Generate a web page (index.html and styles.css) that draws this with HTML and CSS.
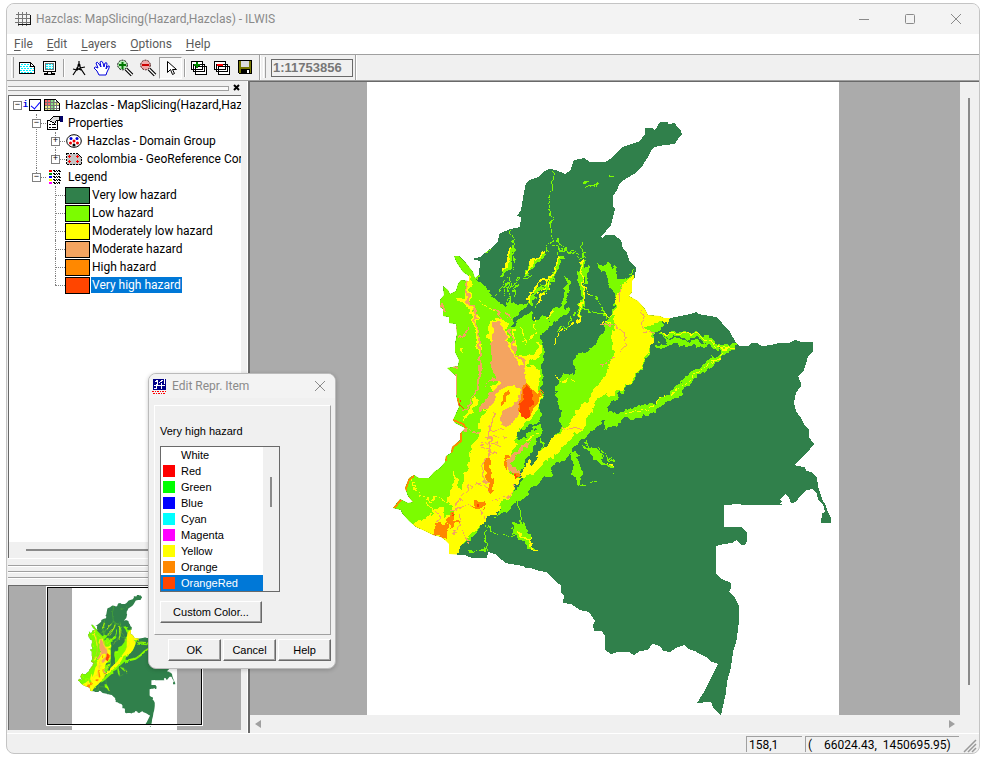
FILE: index.html
```html
<!DOCTYPE html>
<html lang="en">
<head>
<meta charset="utf-8">
<title>Hazclas: MapSlicing(Hazard,Hazclas) - ILWIS</title>
<link rel="stylesheet" href="styles.css">
</head>
<body>
<div class="window">
  <header class="titlebar">
    <svg class="app-icon" width="17" height="14" viewBox="0 0 17 14" shape-rendering="crispEdges"><path d="M1 2.500h14M0 6.500h16M0 10.500h16M3.500 0v14M7.500 0v14M11.500 0v14" stroke="#777" fill="none"/><path d="M15.500 3v9.500h-13" stroke="#111" fill="none"/></svg>
    <h1>Hazclas: MapSlicing(Hazard,Hazclas) - ILWIS</h1>
    <div class="caption-buttons">
      <button aria-label="Minimize"><svg width="12" height="12"><path d="M1 6.500h10"/></svg></button>
      <button aria-label="Maximize"><svg width="12" height="12"><rect x="1.500" y="1.500" width="9" height="9" rx="1"/></svg></button>
      <button aria-label="Close"><svg width="12" height="12"><path d="M1 1l10 10M11 1L1 11"/></svg></button>
    </div>
  </header>
  <nav class="menubar">
    <button><u>F</u>ile</button><button><u>E</u>dit</button><button><u>L</u>ayers</button><button><u>O</u>ptions</button><button><u>H</u>elp</button>
  </nav>
  <div class="toolbar">
    <span class="grip"></span>
    <button aria-label="Entire map"><svg width="18" height="16" viewBox="0 0 18 16" shape-rendering="crispEdges"><path d="M1.500 2.500h11l4 4v7h-15z" fill="#fff" stroke="#000"/><path d="M3 4.500h9M2 6.500h10M3 8.500h13M2 10.500h14M3 12.500h12" stroke="#0ef" stroke-dasharray="2 1"/><path d="M12.500 2.500v4h4" fill="none" stroke="#000"/></svg></button>
    <button aria-label="Redraw"><svg width="16" height="16" viewBox="0 0 16 16" shape-rendering="crispEdges"><rect x="1.500" y="1.500" width="12" height="10" fill="#fff" stroke="#000"/><rect x="3.500" y="3.500" width="8" height="6" fill="#dff" stroke="#777"/><path d="M4 4.500h7M4 6.500h7M4 8.500h7" stroke="#0ef" stroke-dasharray="2 1"/><path d="M5.500 11.500h4v2h3v1h-10v-1h3z" fill="#eee" stroke="#000"/></svg></button>
    <span class="sep"></span>
    <button aria-label="Measure distance"><svg width="16" height="16" viewBox="0 0 16 16"><path d="M8 1v4M8 4L6 9 2 15M8 4l2 5 4 6M2 9l4 1 3-2 5-1M5 8l5 2" fill="none" stroke="#000" stroke-width="1.200"/><circle cx="8" cy="5" r="1.500"/></svg></button>
    <button aria-label="Pan"><svg width="18" height="18" viewBox="0 0 18 18"><path d="M6 16l-2-4-3-3q1-2 4 0L3 4q1-2 3 1l2 3-1-5q2-2 3 1l1 4 1-4q2-1 2 1l-1 5 2-3q2-1 1 2l-2 4-1 3z" fill="#fff" stroke="#00d"/></svg></button>
    <button aria-label="Zoom in"><svg width="18" height="18" viewBox="0 0 18 18"><path d="M10 10l6 6" stroke="#000" stroke-width="3.500"/><path d="M10 10l6 6" stroke="#fff" stroke-width="1.300"/><circle cx="6.500" cy="6" r="4.800" fill="#beb" stroke="#000" stroke-dasharray="2 1"/><path d="M3 6h7M6.500 3v7" stroke="#070" stroke-width="2"/></svg></button>
    <button aria-label="Zoom out"><svg width="18" height="18" viewBox="0 0 18 18"><path d="M10 10l6 6" stroke="#000" stroke-width="3.500"/><path d="M10 10l6 6" stroke="#fff" stroke-width="1.300"/><circle cx="6.500" cy="6" r="4.800" fill="#eaa" stroke="#411" stroke-dasharray="2 1"/><path d="M3 6h7" stroke="#c00" stroke-width="2"/></svg></button>
    <button class="pressed" aria-label="Normal pointer"><svg width="12" height="16" viewBox="0 0 12 16"><path d="M2.500 1.500v11l3-3 2 5 2-1-2-4h4z" fill="#fff" stroke="#000"/></svg></button>
    <span class="sep"></span>
    <button aria-label="Add layer"><svg width="17" height="16" viewBox="0 0 17 16" shape-rendering="crispEdges"><path d="M4.500 6.500h11v8h-11zM2.500 4.500h11v7h-11zM.500 1.500h11v8h-11z" fill="#fff" stroke="#000"/><path d="M3 5h6M6 2v6" stroke="#080" stroke-width="2"/></svg></button>
    <button aria-label="Remove layer"><svg width="17" height="16" viewBox="0 0 17 16" shape-rendering="crispEdges"><path d="M4.500 6.500h11v8h-11zM2.500 4.500h11v7h-11zM.500 1.500h11v8h-11z" fill="#fff" stroke="#000"/><path d="M3 5h6" stroke="#f00" stroke-width="2"/></svg></button>
    <button aria-label="Save view"><svg width="15" height="15" viewBox="0 0 15 15" shape-rendering="crispEdges"><path d="M.500.500h13v13H1.500l-1-1z" fill="#770" stroke="#000"/><path d="M3 1h8v6H3z" fill="#ddd"/><path d="M3 9h9v5H3z"/><path d="M9 10h2v3H9z" fill="#fff"/></svg></button>
    <span class="bar-end"></span>
    <span class="grip"></span>
    <input class="scale" type="text" value="1:11753856" aria-label="Scale">
    <span class="bar-end"></span>
  </div>

  <main class="workspace">
    <aside class="dock">
      <div class="dock-head"><span class="dock-grip"></span><button aria-label="Close panel"><svg width="8" height="8"><path d="M1 1l5 5M6 1L1 6" stroke="#000" stroke-width="2"/></svg></button></div>
      <div class="tree-box">
        <ul class="tree">
          <li>
            <div class="row root"><span class="exp">−</span><i class="info">i</i><input type="checkbox" checked aria-label="Show layer Hazclas">
              <svg width="16" height="12" viewBox="0 0 16 12" shape-rendering="crispEdges"><path d="M0 0h12l4 4v8H0z" fill="#fff"/><path d="M1 1h5v5H1z" fill="#f66"/><path d="M6 1h5v10H6z" fill="#8d8"/><path d="M11 3h4v4h-4zM1 7h5v4H1z" fill="#ee8"/><path d="M0 3.500h15M0 6.500h15M0 9.500h15M3.500 0v12M6.500 0v12M9.500 0v12M12.500 1v11" stroke="#777"/><path d="M.500.500h11l4 4v7H.500z" fill="none" stroke="#000"/></svg>
              <span class="label">Hazclas - MapSlicing(Hazard,Hazclas)</span></div>
            <ul>
              <li>
                <div class="row"><span class="exp">−</span>
                  <svg width="16" height="14" viewBox="0 0 16 14" shape-rendering="crispEdges"><path d="M.500 4.500h10v9H.500z" fill="#fff" stroke="#000"/><path d="M2 8.500h2M5 8.500h4M2 11.500h2M5 11.500h4" stroke="#000"/><path d="M2.500 4.500l4-4h6v4h-3l-2 3z" fill="#ddd" stroke="#000"/><path d="M13 0h3v6h-3z" fill="#006"/></svg>
                  <span class="label">Properties</span></div>
                <ul>
                  <li><div class="row"><span class="exp">+</span>
                    <svg width="16" height="14" viewBox="0 0 16 14"><ellipse cx="8" cy="7" rx="7.300" ry="6.300" fill="#fff" stroke="#000"/><circle cx="5" cy="4.500" r="1.500" fill="#00d"/><circle cx="11" cy="4.500" r="1.500" fill="#00d"/><circle cx="8" cy="7" r="1.500" fill="#e00"/><circle cx="4.500" cy="9" r="1.500" fill="#e00"/><circle cx="11.500" cy="9" r="1.500" fill="#e00"/><circle cx="8" cy="11" r="1.500"/></svg>
                    <span class="label">Hazclas - Domain Group</span></div></li>
                  <li><div class="row"><span class="exp">+</span>
                    <svg width="16" height="12" viewBox="0 0 16 12" shape-rendering="crispEdges"><path d="M.500.500h11l4 4v7H.500z" fill="#c4c4c4" stroke="#000" stroke-dasharray="2 1"/><path d="M2 3.500h3M3.500 2v3M10 3.500h3M11.500 2v3M2 8.500h3M3.500 7v3M10 8.500h3M11.500 7v3" stroke="#f00"/></svg>
                    <span class="label">colombia - GeoReference Corners</span></div></li>
                </ul>
              </li>
              <li>
                <div class="row"><span class="exp">−</span>
                  <svg class="legend-icon" width="12" height="14" viewBox="0 0 12 14" shape-rendering="crispEdges"><path d="M0 0h3v2H0z" fill="#f00"/><path d="M0 3h3v2H0z" fill="#090"/><path d="M0 6h3v2H0z" fill="#00f"/><path d="M0 9h3v2H0z" fill="#ff0"/><path d="M0 12h3v2H0z" fill="#f0f"/><path d="M4 .500h8M5 1.500h7M4 3.500h7M5 4.500h6M4 6.500h8M5 7.500h7M4 9.500h7M5 10.500h7M4 12.500h8M5 13.500h6" stroke="#000" stroke-dasharray="2 1 1 1"/></svg>
                  <span class="label">Legend</span></div>
                <ul>
                  <li><div class="row leaf"><span class="swatch very-low"></span><span class="label">Very low hazard</span></div></li>
                  <li><div class="row leaf"><span class="swatch low"></span><span class="label">Low hazard</span></div></li>
                  <li><div class="row leaf"><span class="swatch moderately-low"></span><span class="label">Moderately low hazard</span></div></li>
                  <li><div class="row leaf"><span class="swatch moderate"></span><span class="label">Moderate hazard</span></div></li>
                  <li><div class="row leaf"><span class="swatch high"></span><span class="label">High hazard</span></div></li>
                  <li><div class="row leaf"><span class="swatch very-high"></span><span class="label selected">Very high hazard</span></div></li>
                </ul>
              </li>
            </ul>
          </li>
        </ul>
        <div class="tree-scroll"><span></span></div>
      </div>
      <div class="splitter"><span></span><span></span><span></span></div>
      <div class="overview">
        <svg class="overview-map" width="105" height="143" viewBox="367 86 472 643"><path d="M367 80h472v660H367z" fill="#fff"/><use href="#colombia"/></svg>
        <span class="extent"></span>
      </div>
    </aside>

    <section class="view">
      <div class="canvas">
        <svg class="map" width="472" height="633" viewBox="367 82 472 633" shape-rendering="crispEdges" role="img" aria-label="Hazard map of Colombia">
          <defs>
            <filter id="rough" filterUnits="userSpaceOnUse" x="367" y="82" width="472" height="633" color-interpolation-filters="sRGB">
              <feTurbulence type="fractalNoise" baseFrequency="0.14" numOctaves="2" seed="4" result="noise"/>
              <feDisplacementMap in="SourceGraphic" in2="noise" scale="9" xChannelSelector="R" yChannelSelector="G"/>
            </filter>
            <path id="coast" d="M660 122L668 122 668 124 675 123 677 127 680 129 682 134 679 137 675 144 664 145 654 147 651 151 648 157 641 168 634 174 627 178 620 183 617 190 613 196 613 207 615 209 613 217 611 225 606 231 601 237 603 238 605 235 614 235 621 240 623 249 627 253 630 262 636 267 635 277 632 281 632 292 629 296 638 301 645 309 648 315 660 316 664 318 671 318 690 314 697 312 698 314 716 317 722 323 730 332 735 341 739 346 748 346 752 343 757 343 762 346 771 345 779 343 789 343 795 340 801 342 813 342 813 352 808 356 806 364 804 370 798 376 801 383 801 386 796 393 794 403 796 411 801 418 804 424 809 430 809 437 814 444 810 449 795 464 796 466 805 467 806 471 812 472 817 478 818 486 822 499 825 504 828 512 831 518 831 523 821 523 822 513 825 512 823 504 818 500 817 494 813 489 806 490 800 496 796 502 791 503 789 497 785 494 780 499 782 502 779 503 783 505 741 505 740 504 724 505 724 527 742 527 747 533 747 541 745 545 741 545 737 540 732 543 724 544 716 546 716 574 722 579 731 583 731 588 729 592 735 598 739 606 739 621 738 630 736 643 733 652 731 667 727 682 726 693 723 706 721 715 717 712 713 708 712 703 709 702 697 703 704 692 710 680 718 664 712 662 706 657 700 654 695 651 688 649 684 645 678 647 673 650 670 652 663 651 661 647 657 645 652 644 648 650 640 651 634 655 629 652 618 652 611 654 605 650 605 636 602 631 594 631 593 625 595 621 589 612 580 610 571 604 563 603 564 596 561 592 561 585 556 582 549 575 546 572 539 571 531 568 526 568 523 566 505 563 502 560 495 554 488 552 487 558 472 558 465 555 449 554 449 544 445 540 441 537 433 535 425 531 416 527 409 521 402 513 401 510 393 508 400 499 408 503 413 502 408 496 405 488 409 478 414 475 419 478 429 478 434 472 440 468 445 462 446 456 451 453 452 447 460 440 460 434 465 428 455 423 453 420 459 407 456 395 456 376 447 368 458 366 459 360 455 352 455 344 457 334 456 324 449 323 449 317 443 316 443 309 440 307 440 300 444 295 443 286 448 290 450 294 456 291 458 284 461 280 469 281 469 276 463 272 457 263 454 256 459 256 466 263 473 272 475 278 479 275 480 261 472 259 480 257 490 249 498 242 499 234 510 229 520 227 521 217 517 216 521 210 523 198 526 183 530 180 538 177 545 171 549 169 556 170 565 174 570 171 574 160 584 158 590 162 605 162 612 158 622 147 640 141 645 134 645 128 652 128 655 130z"/>
            <clipPath id="land"><use href="#coast"/></clipPath>
          </defs>
          <g id="colombia">
            <use href="#coast" fill="#30804b"/>
            <g clip-path="url(#land)"><g filter="url(#rough)">
              <g class="f-low">
                <path d="M435 250L466 255 478 278 483 286 490 293 497 301 505 307 514 300 520 304 529 300 522 312 513 320 511 328 519 318 530 313 535 325 542 315 548 322 552 312 558 306 568 310 563 318 553 323 546 329 541 336 545 352 541 365 543 380 541 400 542 432 531 452 521 470 512 488 503 504 487 518 478 530 463 545 455 560 380 560 380 250z"/>
                <path d="M597 265L612 263 614 270 617 279 632 278 660 300 662 325 654 335 647 358 640 372 626 388 617 398 606 410 613 417 602 423 583 440 570 451 567 458 552 465 553 476 544 478 534 487 525 495 517 503 505 512 495 517 505 498 524 480 545 450 560 428 560 408 556 390 558 380 563 373 569 375 575 370 575 357 590 350 602 334 610 312 618 300 611 286 607 276z"/>
                <path d="M606 415L633 407 655 403 672 390 688 374 705 362 720 353 720 346 736 344 737 348 725 352 716 364 702 374 690 384 678 396 654 413 620 421 605 431z"/>
                <path d="M660 333L680 332 705 334 722 347 716 350 702 339 680 337 658 336zM660 337L672 338 691 340 709 344 705 348 673 344 669 347 654 347 654 343 669 344z"/>
                <path d="M570 451L577 451 582 478 579 487 573 473zM582 446L598 450 605 463 616 467 610 469 600 463 592 456zM513 523L522 523 530 536 531 546 537 552 530 551 523 541 515 537z"/>
              </g>
              <g class="s-low" fill="none">
                <path d="M550 170l3 5v6l-1 8-3 10v12l2 12 1 10v10l8 6 10 4 12 6 5-8M553 240l-5 8-4 5M555 240l8 6 3 5 10 1M583 243l2 19M510 231l3 8v10M585 184l6-3M586 188l11-4M610 176h5M636 266l-6 13M491 247l-10 9"/>
                <path d="M515 246l-2 17-4 12-6 12-9 10M509 277l2 15-4 13M511 290l8-13 8 1 3-2M584 262l-2 42-7 8-7 13-12 7M584 288l12 10 7 10 4 10M583 308l22 8M500 301l7-18 4 22M520 277l-7 20M559 250l-1 18-8 10-5 12-10 18M596 445l8 10 10 6M585 441l5 8 6 2 6 8M578 487l10-2 3-4h7M610 474h6M519 500l2 22v20M485 526l9 8 22 2 13 5M485 530v20h-16"/>
              </g>
              <g class="s-low" fill="none" stroke-width="4">
                <path d="M513 248L508 263 502 276M545 253L535 262 528 268 526 276M562 255L558 267 548 284 535 292 530 305M581 263L580 280 583 305 578 318M567 277L567 292 563 305 555 318M590 265L585 270 588 285M557 445L560 458M528 325L523 340"/>
                <path d="M541 450L545 420M524 440L530 452" stroke-width="2"/>
              </g>
              <g class="f-mid">
                <path d="M632 278L622 285 615 300 613 340 613 357 606 374 600 382 590 395 580 408 570 422 555 436 540 450 525 464 522 478 530 477 545 463 567 445 582 428 592 412 598 397 607 393 611 397 622 390 640 370 651 346 653 337 645 326 668 322 668 312 650 300 640 280z"/>
                <path d="M491 320L505 318 510 342 518 355 532 354 538 349 535 343 542 347 541 358 526 365 539 368 539 382 540 408 528 420 520 430 515 442 511 455 507 465 510 477 521 478 512 492 503 505 492 515 484 524 470 533 463 545 455 560 440 560 410 527 420 520 428 516 442 505 444 516 455 514 448 500 456 470 459 492 465 475 472 448 480 437 478 425 490 405 496 394 490 387 498 380 491 360 494 343 486 338z"/>
                <path d="M468 273L472 282 470 304 477 315 477 330 482 345 480 360 476 340 471 315 465 302 458 303 457 298 465 299 467 285zM461 347L465 355 461 352zM463 420L475 397 478 400 470 415z"/>
                <path d="M503 425l19-13-14 12-12 18zM540 430l-12 11h-5z"/>
              </g>
              <g class="s-mid" fill="none">
                <path d="M512 248L507 263 503 270M544 252L530 265 526 275M560 256L553 276 543 279 531 292 528 303M580 262L583 280 583 300 578 322" stroke-width="2"/>
                <path d="M582 285L592 295M520 325L524 335 526 345M538 295L548 278 549 290M504 435L520 426 530 416M575 322L560 333 554 345M556 375L560 382 575 380M410 470L415 490 425 500 438 498 448 502M425 502L434 510 445 512M480 435L487 420M480 300L500 315M513 330L515 350M495 400L505 385 520 376M536 315L534 335 522 340M604 315L614 313M603 321L618 325"/>
                <path d="M660 334L680 333 700 335 716 345 723 349 736 347M723 349L720 357 705 367 690 379 678 391 660 399 647 410 625 413"/>
                <path stroke-width="2" d="M607 462l8 4M518 534l12 6 2 10 4 2M545 292l-8 12M546 321l8-9"/>
              </g>
              <path class="f-moderate" d="M494 321h6l6 12 3 14 7 12 8 10 2 13-1 20-8 15-8 10-9-1v-9l8-9 10-8 2-9-6-6-14 4-6 12-7 10h-7l1-6 11-14 8-8-6-5-2-12-2-14zM504 311l4 4 4 8M532 440L524 446 513 452 507 462 508 472 518 476 523 473 518 470 512 463 514 457 526 449z"/>
              <g class="s-moderate" fill="none" stroke-width="2">
                <path d="M467 280l1 20 8 10-1 10 5 22v30l-3 15-10 20-7 6M495 309l8 10M510 330l5 22 8 10v20M495 413l-5 15v22l-8 17 1 13 6 2-1 10"/>
                <path stroke-width="1" d="M480 442l20 3M484 438l14-2M480 445l20 10M495 443l10-6M619 285l1 20M600 322l11 3 12 7 3 13-8 8-7 8-10 5M642 334l14-1M641 312l3 12-1 6M455 505l7-5M462 497l11-13 10-1M475 482l12 6M493 500l14-3 8-13M450 510l12-3 18-3 5 15M490 430l15-1M458 513l2 12-5 8M437 512l1 12M562 429l18-1M462 530l8 15M480 433l-18-4M470 330l-10 8M505 370l18 3M485 388l10-12"/>
              </g>
              <path d="M484 460h5l6 32-7 1zM472 503l6-2h8v5l-6 4-7-2zM450 513l4-1v8l7 1-6 4-3 4-5-5zM436 525l10-2 3 8-3 9-12-4zM523 386l5-3 4 6 6 4 5-2-5 6-2 7-5 10-8 2-6-5 4-12zM503 395l4-3v6l-5 5zM505 455l4 0-2 7v8l-3-7zM513 474l8-1-3 4z" class="f-high"/>
              <path d="M524 386l7 2 1 5 0 9-3 5 1 8-6 1-5-3 1-9 4-5zM513 475l5 1-3 2zM474 506l5-1v3zM450 515l3-1v3zM453 417l4 2-4 2zM460 400l2 8-1 3z" class="f-extreme"/>
              <g class="f-none"><path d="M545 355l8-7 4 12-4 18v20l-5 20 2 15-8 10-2-20 4-20zM496 288l7 8 2 9-8-6zM520 430l20-8-8 9-14 8zM533 448l7-6-3 18-7 6zM514 485l5-2-4 9z"/></g>
            </g>
              <path d="M440 308l2-4 3 8M456 326v10M452 366l6 2M456 374v21" class="s-moderate" fill="none" stroke-width="2"/>
              <path d="M458 398v8M453 420l10 4 3 4M461 430v11l-8 6-2 6M446 456v5M414 476l-5 4-3 8v3M408 497l4 5M394 508l7-8" class="s-high" fill="none" stroke-width="2"/>
            </g>
          </g>
        </svg>
      </div>
      <div class="vscroll"><span></span></div>
      <div class="hscroll"><button class="arrow-left" aria-label="Scroll left"></button><button class="arrow-right" aria-label="Scroll right"></button></div>
    </section>
  </main>

  <footer class="statusbar">
    <output class="rowcol">158,1</output>
    <output class="coords">(&nbsp;&nbsp;&nbsp; 66024.43,&nbsp; 1450695.95)</output>
    <svg width="14" height="14"><path d="M1 13L13 1M5 13l8-8M9 13l4-4" stroke="#999" stroke-width="1.500"/></svg>
  </footer>
</div>

<form class="dialog" role="dialog" aria-labelledby="dialog-title">
  <div class="dialog-title">
    <svg width="14" height="15" viewBox="0 0 14 15" shape-rendering="crispEdges"><path d="M1 0h13v11H1z" fill="#008"/><path d="M2 6.500h11M5.500 1v3l-1 3v3M9.500 4v6M12.500 0v5M3 3l3-2M7 4l4-3M2 9.500h3" stroke="#fff" fill="none"/><path d="M0 12.500h14M1 14.500h13" stroke="#f00" stroke-dasharray="2 1 1 1"/></svg>
    <h2 id="dialog-title">Edit Repr. Item</h2>
    <button type="button" aria-label="Close dialog"><svg width="12" height="12"><path d="M1 1l10 10M11 1L1 11"/></svg></button>
  </div>
  <div class="dialog-panel">
    <label for="colors">Very high hazard</label>
    <select id="colors" size="9">
      <option class="c-white">White</option>
      <option class="c-red">Red</option>
      <option class="c-green">Green</option>
      <option class="c-blue">Blue</option>
      <option class="c-cyan">Cyan</option>
      <option class="c-magenta">Magenta</option>
      <option class="c-yellow">Yellow</option>
      <option class="c-orange">Orange</option>
      <option class="c-orangered" selected>OrangeRed</option>
    </select>
    <button type="button" class="push custom">Custom Color...</button>
  </div>
  <div class="dialog-actions">
    <button type="button" class="push">OK</button>
    <button type="button" class="push">Cancel</button>
    <button type="button" class="push">Help</button>
  </div>
</form>
</body>
</html>
```
FILE: styles.css
```css
* { box-sizing: border-box; }

body {
  margin: 0;
  background: #fff;
  color: #000;
  font: 12px/18px Roboto, "Open Sans", sans-serif;
}

button, input, select { font: inherit; color: inherit; }
button { border: 0; padding: 0; background: none; }
ul { list-style: none; margin: 0; padding: 0; }

.window {
  display: flex;
  flex-direction: column;
  height: calc(100vh - 9px);
  margin: 3px 6px 6px;
  border: 1px solid #c4c4c4;
  border-radius: 8px;
  background: #f0f0f0;
  overflow: hidden;
}

.titlebar {
  display: flex;
  align-items: center;
  height: 30px;
  padding-left: 8px;
  background: #f3f3f3;
  color: #8a8a8a;
}
.titlebar h1 { flex: 1; margin: 0 0 0 4px; font: inherit; }
.caption-buttons { display: flex; }
.caption-buttons button { display: grid; place-items: center; width: 46px; height: 28px; }
.caption-buttons svg, .dialog-title button svg { fill: none; stroke: #8a8a8a; }

.menubar {
  display: flex;
  gap: 14px;
  height: 20px;
  padding-left: 7px;
  background: #fff;
  color: #5a5a5a;
}
.menubar button { line-height: 20px; }
.menubar u { text-underline-offset: 2px; }

.toolbar {
  display: flex;
  align-items: center;
  height: 27px;
  padding-left: 4px;
  border-top: 1px solid #a0a0a0;
  border-bottom: 1px solid #a0a0a0;
}
.toolbar button { display: grid; place-items: center; width: 23px; height: 22px; }
.toolbar .pressed { border: 1px solid; border-color: #a0a0a0 #fff #fff #a0a0a0; background: #f8f8f8; }
.grip { width: 3px; height: 21px; margin-right: 1px; border-right: 1px solid #a0a0a0; border-left: 1px solid #fff; }
.sep { width: 2px; height: 18px; margin: 0 2px; border-left: 1px solid #a0a0a0; border-right: 1px solid #fff; }
.bar-end { width: 2px; height: 25px; margin: 0 2px; border-left: 1px solid #a0a0a0; border-right: 1px solid #fff; }
.scale {
  width: 82px;
  height: 18px;
  margin: 0 0 0 4px;
  padding: 0 1px;
  border: 1px solid #696969;
  border-radius: 0;
  background: #f0f0f0;
  color: #777;
  font: bold 13px/16px "Liberation Sans", sans-serif;
}

.workspace { display: flex; flex: 1; min-height: 0; }

.dock {
  display: flex;
  flex-direction: column;
  width: 241px;
  padding: 0 6px 3px 1px;
  border-right: 1px solid #fff;
}
.dock-head { display: flex; align-items: center; justify-content: space-between; height: 14px; }
.dock-grip { width: 221px; height: 5px; border: 1px solid #a0a0a0; border-width: 1px 1px 1px 0; background: #fafafa; }
.dock-head button { width: 8px; height: 8px; line-height: 0; }

.tree-box {
  display: flex;
  flex: 1;
  flex-direction: column;
  border-top: 1px solid #696969;
  border-left: 1px solid #696969;
  background: #fff;
  overflow: hidden;
}
.tree { flex: 1; padding-left: 4px; }
.tree li { position: relative; }
.tree li ul { margin-left: 19px; }
.tree li li::before {
  content: "";
  position: absolute;
  top: 0;
  bottom: 0;
  left: 4px;
  border-left: 1px dotted #808080;
}
.tree li li:last-child::before { bottom: auto; height: 9px; }
.row { position: relative; display: flex; align-items: center; height: 18px; white-space: nowrap; }
.row::before {
  content: "";
  position: absolute;
  top: 9px;
  left: 4px;
  width: 10px;
  border-top: 1px dotted #808080;
}
.row svg { flex: none; margin: 0 5px 0 6px; }
.row.root svg { margin: 0 5px 0 3px; }
.row .legend-icon { margin: 0 7px 0 8px; }
.label { flex: none; }
.exp {
  position: relative;
  flex: none;
  width: 9px;
  height: 9px;
  border: 1px solid #808080;
  background: #fff;
  font: 9px/7px "Liberation Mono", monospace;
  text-align: center;
}
.info { position: relative; flex: none; width: 7px; background: #fff; color: #00d; font: bold 9px/12px "Liberation Mono", monospace; text-align: center; }
.row input {
  flex: none;
  appearance: none;
  position: relative;
  width: 12px;
  height: 12px;
  margin: 0;
  border: 1px solid #000;
  background: #fff;
}
.row input:checked::after {
  content: "";
  position: absolute;
  top: 0;
  left: 3px;
  width: 4px;
  height: 8px;
  border: solid #00f;
  border-width: 0 1px 1px 0;
  transform: rotate(40deg);
}
.leaf { padding-left: 14px; }
.swatch { width: 25px; height: 17px; margin-right: 1px; border: 1px solid #000; }
.leaf .label { padding: 0 1px; line-height: 16px; }
.selected { background: #0078d7; color: #fff; }
.very-low { background: #30804b; }
.low { background: #7cfc00; }
.moderately-low { background: #ff0; }
.moderate { background: #f4a460; }
.high { background: #f80; }
.very-high { background: #ff4500; }

.tree-scroll { height: 16px; padding: 7px 0 0 17px; background: #f0f0f0; }
.tree-scroll span { display: block; width: 150px; height: 2px; background: #8a8a8a; }

.splitter { display: flex; flex-direction: column; gap: 4px; height: 27px; padding-top: 6px; border-top: 1px solid #fff; }
.splitter span { height: 2px; border-top: 1px solid #a0a0a0; border-bottom: 1px solid #fff; }

.overview {
  position: relative;
  height: 145px;
  padding: 1px 0 0 63px;
  border-top: 1px solid #696969;
  border-left: 1px solid #696969;
  background: #ababab;
  line-height: 0;
}
.extent { position: absolute; top: 1px; left: 38px; width: 155px; height: 138px; border: 1px solid #000; outline: 1px solid #fff; }

.view {
  display: grid;
  flex: 1;
  grid-template: minmax(0, 1fr) 18px / minmax(0, 1fr) 19px;
  border-top: 1px solid #696969;
  border-left: 2px solid #696969;
  min-width: 0;
}
.canvas { display: flex; justify-content: center; padding-right: 4px; background: #ababab; overflow: hidden; }
.map { flex: none; background: #fff; }
.f-low { fill: #7cfc00; }
.f-mid { fill: #ff0; }
.f-moderate { fill: #f4a460; }
.f-high { fill: #f80; }
.f-extreme { fill: #ff4500; }
.f-none { fill: #30804b; }
.s-low { stroke: #7cfc00; }
.s-mid { stroke: #ff0; }
.s-moderate { stroke: #f4a460; }
.s-high { stroke: #f80; }
.vscroll { padding: 16px 0 30px 8px; }
.vscroll span { display: block; width: 2px; height: 100%; background: #8a8a8a; }
.hscroll { display: flex; justify-content: space-between; align-items: center; padding: 0 5px; }
.hscroll button { width: 0; height: 0; border: solid transparent; border-width: 4px 6px; }
.hscroll .arrow-left { border-left-width: 0; border-right-color: #a0a0a0; }
.hscroll .arrow-right { border-right-width: 0; border-left-color: #a0a0a0; }

.statusbar {
  display: flex;
  justify-content: flex-end;
  gap: 3px;
  height: 20px;
  padding: 2px 2px 2px 0;
  border-top: 1px solid #fff;
}
.statusbar output { height: 16px; padding-left: 2px; border-top: 1px solid #a0a0a0; border-left: 1px solid #a0a0a0; line-height: 16px; white-space: nowrap; }
.rowcol { width: 56px; }
.coords { width: 154px; }
.statusbar svg { margin: 3px 0 0 1px; }

.dialog {
  position: absolute;
  top: 373px;
  left: 148px;
  width: 188px;
  border: 1px solid #bbb;
  border-radius: 8px;
  background: #f0f0f0;
  box-shadow: 0 1px 4px rgba(0, 0, 0, .2);
  font: 11px/16px "Liberation Sans", sans-serif;
  overflow: hidden;
}
.dialog-title { display: flex; align-items: center; height: 24px; padding: 0 9px 0 3px; background: #f3f3f3; color: #8a8a8a; font: 12px/18px Roboto, sans-serif; }
.dialog-title h2 { flex: 1; margin: 0 0 0 6px; font: inherit; }
.dialog-title button { width: 12px; height: 12px; line-height: 0; }
.dialog-panel {
  display: flex;
  flex-direction: column;
  align-items: flex-start;
  margin: 7px 4px 0 5px;
  padding: 17px 5px 11px;
  border: 1px solid;
  border-color: #fff #a0a0a0 #a0a0a0 #fff;
}
.dialog-panel select {
  width: 120px;
  height: 146px;
  margin: 7px 0 9px;
  padding: 0 16px 0 0;
  border: 1px solid #696969;
  border-radius: 0;
  outline: 0;
  background: linear-gradient(#8a8a8a, #8a8a8a) 109px 30px / 2px 30px no-repeat, linear-gradient(#f0f0f0, #f0f0f0) right / 16px 100% no-repeat, #fff;
  overflow: hidden;
}
option { display: flex; align-items: center; height: 16px; min-height: 16px; padding: 0 2px; line-height: 16px; color: #000; }
option::before { content: ""; width: 12px; height: 12px; margin-right: 6px; }
option:checked { background: linear-gradient(#0078d7, #0078d7); color: #fff; }
.c-white::before { background: #fff; }
.c-red::before { background: #f00; }
.c-green::before { background: #0f0; }
.c-blue::before { background: #00f; }
.c-cyan::before { background: #0ff; }
.c-magenta::before { background: #f0f; }
.c-yellow::before { background: #ff0; }
.c-orange::before { background: #f80; }
.c-orangered::before { background: #ff4500; }

.push {
  width: 53px;
  height: 22px;
  border: 1px solid;
  border-color: #fff #696969 #696969 #fff;
  box-shadow: inset -1px -1px #a0a0a0;
  background: #f0f0f0;
}
.custom { width: 102px; }
.dialog-actions { display: flex; justify-content: flex-end; gap: 2px; padding: 4px 4px 7px; }
```
